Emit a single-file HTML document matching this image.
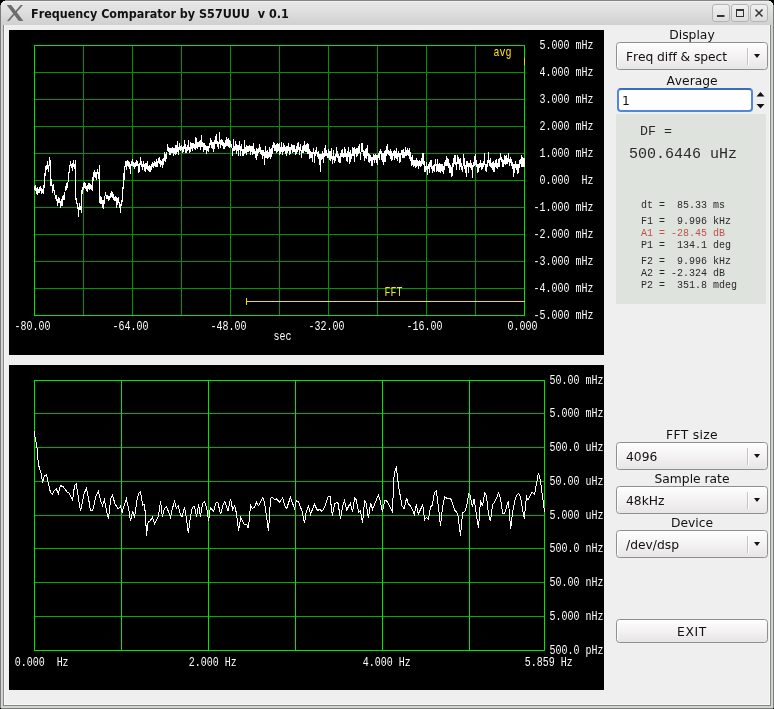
<!DOCTYPE html>
<html><head><meta charset="utf-8"><title>Frequency Comparator by S57UUU v 0.1</title>
<style>
html,body{margin:0;padding:0;}
body{width:774px;height:709px;overflow:hidden;background:#000;position:relative;font-family:"DejaVu Sans","Liberation Sans",sans-serif;}
#win{position:absolute;left:0;top:0;width:774px;height:709px;background:#efefef;overflow:hidden;}
.k{position:absolute;background:#000;height:1px;}
#titlebar{position:absolute;left:0;top:0;width:774px;height:25px;background:linear-gradient(#858585 0,#858585 1px,#f1f1f1 1px,#f1f1f1 2px,#e7e7e7 2px,#e0e0e0 11px,#d5d5d5 20px,#d0d0d0 25px);}
.wb{position:absolute;top:4px;width:17.5px;height:17.5px;box-sizing:border-box;border:1px solid #b4b4b4;border-radius:3px;background:linear-gradient(#f0f0f0,#dcdcdc);}
.eo{position:absolute;background:#7a7d7a;}
.em{position:absolute;background:#d3d3d3;}
.ei{position:absolute;background:#858785;}
.eh{position:absolute;background:#f8f8f8;}
.plot{position:absolute;left:9px;width:595px;height:325px;background:#000;}
svg text{font:10px "Liberation Mono","DejaVu Sans Mono",monospace;fill:#fff;white-space:pre;}
.combo{position:absolute;left:616px;width:152px;height:28px;box-sizing:border-box;border:1px solid #8e908e;border-radius:3.5px;background:linear-gradient(#fefefe,#f4f2f2 50%,#e7e5e5);box-shadow:inset 1px 1px 0 #fff;}
.combo i{position:absolute;left:130px;top:5px;width:1px;height:17px;background:#c4c4c4;border-right:1px solid #fff;}
.combo b{position:absolute;left:136.5px;top:11px;width:0;height:0;border-left:3.5px solid transparent;border-right:3.5px solid transparent;border-top:4px solid #111;}
#spin{position:absolute;left:617px;top:88px;width:136px;height:24px;box-sizing:border-box;border:2px solid #5288db;border-top-color:#3a6cbd;border-radius:4px;background:#fff;}
#panel{position:absolute;left:616px;top:114px;width:150px;height:190px;background:#dfe3dd;}
#exit{position:absolute;left:616px;top:619px;width:152px;height:24px;box-sizing:border-box;border:1px solid #8e908e;border-radius:3.5px;background:linear-gradient(#fefefe,#f4f2f2 50%,#e6e4e4);box-shadow:inset 1px 1px 0 #fff;}
#txt{position:absolute;left:0;top:0;width:774px;height:709px;will-change:transform;}
#txt div{position:absolute;white-space:pre;color:#111;font-kerning:none;}
#title{left:31px;top:6px;font:bold 12px "DejaVu Sans","Liberation Sans",sans-serif;line-height:16px;transform:scaleX(0.933);transform-origin:0 0;}
#txt .lbl{left:616px;width:152px;text-align:center;font-size:12.3px;line-height:18px;}
#txt .ct{left:626px;font-size:12.3px;line-height:26px;}
#txt .m{font-family:"Liberation Mono",monospace;color:#2a2a2a;font-size:10px;left:641px;}
</style></head><body>
<div id="win">
<div id="titlebar"></div>
<svg style="position:absolute;left:7px;top:5px" width="17" height="16" viewBox="0 0 17 16"><path d="M0.3,0.3 L4,0.3 L15.8,15.7 L12,15.7 Z" fill="#6c6c6c" stroke="#555" stroke-width="0.6"/><path d="M13.6,0 L16,0 L2.2,16 L0,16 Z" fill="#6e6e6e"/></svg>
<div class="wb" style="left:712px"><svg width="15" height="15"><rect x="4" y="10" width="7.5" height="2" fill="#333"/></svg></div>
<div class="wb" style="left:731px"><svg width="15" height="15"><rect x="4.5" y="4.5" width="7" height="7" fill="none" stroke="#333" stroke-width="1"/><rect x="4" y="4" width="8" height="2" fill="#333"/></svg></div>
<div class="wb" style="left:750px"><svg width="15" height="15"><path d="M4.5,4.5 L11.5,11.5 M11.5,4.5 L4.5,11.5" stroke="#333" stroke-width="1.5" fill="none"/></svg></div>

<div class="plot" style="top:30px"></div>
<div class="plot" style="top:365px"></div>
<svg style="position:absolute;left:0;top:0;will-change:transform" width="774" height="709" viewBox="0 0 774 709">
<g shape-rendering="crispEdges">
<rect x="83" y="45" width="1" height="271" fill="#009400"/><rect x="132" y="45" width="1" height="271" fill="#009400"/><rect x="181" y="45" width="1" height="271" fill="#009400"/><rect x="230" y="45" width="1" height="271" fill="#009400"/><rect x="279" y="45" width="1" height="271" fill="#009400"/><rect x="328" y="45" width="1" height="271" fill="#009400"/><rect x="377" y="45" width="1" height="271" fill="#009400"/><rect x="426" y="45" width="1" height="271" fill="#009400"/><rect x="475" y="45" width="1" height="271" fill="#009400"/><rect x="34" y="72" width="491" height="1" fill="#009400"/><rect x="34" y="99" width="491" height="1" fill="#009400"/><rect x="34" y="126" width="491" height="1" fill="#009400"/><rect x="34" y="153" width="491" height="1" fill="#009400"/><rect x="34" y="180" width="491" height="1" fill="#009400"/><rect x="34" y="207" width="491" height="1" fill="#009400"/><rect x="34" y="234" width="491" height="1" fill="#009400"/><rect x="34" y="261" width="491" height="1" fill="#009400"/><rect x="34" y="288" width="491" height="1" fill="#009400"/><rect x="34.5" y="45.5" width="490" height="270" fill="none" stroke="#00e600" stroke-width="1"/>
<rect x="34" y="413" width="511" height="1" fill="#00b000"/><rect x="34" y="447" width="511" height="1" fill="#00b000"/><rect x="34" y="481" width="511" height="1" fill="#00b000"/><rect x="34" y="515" width="511" height="1" fill="#00b000"/><rect x="34" y="548" width="511" height="1" fill="#00b000"/><rect x="34" y="582" width="511" height="1" fill="#00b000"/><rect x="34" y="616" width="511" height="1" fill="#00b000"/><rect x="121" y="380" width="1" height="271" fill="#00e600"/><rect x="208" y="380" width="1" height="271" fill="#00e600"/><rect x="295" y="380" width="1" height="271" fill="#00e600"/><rect x="382" y="380" width="1" height="271" fill="#00e600"/><rect x="469" y="380" width="1" height="271" fill="#00e600"/><rect x="34.5" y="380.5" width="510" height="270" fill="none" stroke="#00e600" stroke-width="1"/>
<path d="M34.5,186v4M35.5,185v6M36.5,188v6M37.5,187v8M38.5,189v4M39.5,187v6M40.5,186v5M41.5,188v6M42.5,189v4M43.5,185v9M44.5,173v15M45.5,166v10M46.5,165v5M47.5,161v8M48.5,165v7M49.5,157v9M50.5,160v26M51.5,179v7M52.5,185v8M53.5,184v7M54.5,190v5M55.5,195v4M56.5,195v6M57.5,199v7M58.5,197v6M59.5,198v5M60.5,201v7M61.5,199v7M62.5,196v10M63.5,195v5M64.5,192v8M65.5,186v5M66.5,183v7M67.5,182v6M68.5,172v10M69.5,165v8M70.5,161v5M71.5,164v4M72.5,163v8M73.5,160v7M74.5,164v5M75.5,160v40M76.5,198v6M77.5,203v6M78.5,207v10M79.5,203v7M80.5,206v4M81.5,190v23M82.5,187v7M83.5,183v7M84.5,182v6M85.5,183v6M86.5,186v5M87.5,185v7M88.5,183v6M89.5,183v7M90.5,184v5M91.5,185v5M92.5,177v14M93.5,172v9M94.5,170v7M95.5,172v6M96.5,172v8M97.5,169v5M98.5,172v7M99.5,165v38M100.5,196v8M101.5,197v7M102.5,200v8M103.5,200v9M104.5,196v8M105.5,192v4M106.5,195v4M107.5,195v4M108.5,196v5M109.5,196v4M110.5,193v5M111.5,191v6M112.5,192v6M113.5,194v6M114.5,197v4M115.5,196v5M116.5,197v11M117.5,198v7M118.5,197v6M119.5,202v6M120.5,204v9M121.5,200v6M122.5,187v15M123.5,173v16M124.5,166v14M125.5,161v6M126.5,161v9M127.5,160v6M128.5,161v6M129.5,162v7M130.5,164v10M131.5,161v5M132.5,159v7M133.5,162v5M134.5,163v6M135.5,162v5M136.5,160v6M137.5,161v5M138.5,164v9M139.5,163v9M140.5,157v8M141.5,161v6M142.5,164v6M143.5,161v6M144.5,164v7M145.5,163v9M146.5,163v6M147.5,161v9M148.5,166v5M149.5,165v7M150.5,166v6M151.5,164v6M152.5,162v5M153.5,163v5M154.5,161v5M155.5,162v5M156.5,159v8M157.5,161v6M158.5,158v5M159.5,157v7M160.5,160v7M161.5,161v4M162.5,159v9M163.5,158v7M164.5,152v9M165.5,154v8M166.5,152v7M167.5,144v7M168.5,147v5M169.5,148v7M170.5,148v7M171.5,148v5M172.5,147v6M173.5,148v8M174.5,148v6M175.5,145v10M176.5,145v9M177.5,141v11M178.5,147v8M179.5,143v7M180.5,146v5M181.5,145v5M182.5,147v6M183.5,146v6M184.5,140v9M185.5,144v9M186.5,147v6M187.5,145v6M188.5,140v10M189.5,147v6M190.5,142v10M191.5,143v6M192.5,143v8M193.5,143v5M194.5,144v5M195.5,137v13M196.5,138v10M197.5,142v7M198.5,142v5M199.5,141v6M200.5,140v10M201.5,135v12M202.5,142v5M203.5,143v9M204.5,143v7M205.5,145v5M206.5,146v8M207.5,146v5M208.5,146v6M209.5,143v5M210.5,138v7M211.5,140v8M212.5,142v7M213.5,142v10M214.5,140v9M215.5,136v8M216.5,134v10M217.5,141v6M218.5,142v7M219.5,132v12M220.5,140v8M221.5,139v6M222.5,140v6M223.5,142v7M224.5,143v6M225.5,140v7M226.5,137v9M227.5,139v7M228.5,138v9M229.5,140v8M230.5,141v6M231.5,144v4M232.5,148v8M233.5,139v12M234.5,146v5M235.5,141v9M236.5,144v10M237.5,145v6M238.5,145v11M239.5,141v9M240.5,146v10M241.5,144v7M242.5,149v7M243.5,149v7M244.5,140v14M245.5,147v6M246.5,145v10M247.5,146v6M248.5,146v6M249.5,145v6M250.5,146v9M251.5,146v6M252.5,146v9M253.5,143v11M254.5,149v5M255.5,151v7M256.5,148v12M257.5,149v7M258.5,148v5M259.5,144v8M260.5,147v7M261.5,150v5M262.5,150v9M263.5,150v6M264.5,152v13M265.5,146v12M266.5,151v7M267.5,150v9M268.5,152v6M269.5,147v10M270.5,149v10M271.5,148v9M272.5,145v9M273.5,142v6M274.5,143v8M275.5,145v6M276.5,144v9M277.5,143v9M278.5,144v7M279.5,143v12M280.5,147v7M281.5,142v10M282.5,147v8M283.5,143v9M284.5,145v6M285.5,147v7M286.5,146v10M287.5,146v7M288.5,143v8M289.5,147v8M290.5,147v7M291.5,144v6M292.5,145v8M293.5,145v7M294.5,145v7M295.5,149v6M296.5,146v8M297.5,143v9M298.5,142v8M299.5,147v8M300.5,144v7M301.5,150v8M302.5,146v7M303.5,145v8M304.5,141v10M305.5,145v7M306.5,144v8M307.5,143v11M308.5,144v10M309.5,149v10M310.5,151v7M311.5,152v6M312.5,152v10M313.5,148v6M314.5,152v11M315.5,150v6M316.5,147v7M317.5,152v5M318.5,151v8M319.5,154v11M320.5,154v18M321.5,154v6M322.5,151v8M323.5,153v10M324.5,148v9M325.5,145v11M326.5,150v6M327.5,153v5M328.5,149v9M329.5,151v9M330.5,151v10M331.5,148v11M332.5,156v8M333.5,150v10M334.5,156v7M335.5,154v7M336.5,147v10M337.5,151v7M338.5,154v8M339.5,156v7M340.5,153v10M341.5,150v7M342.5,149v8M343.5,153v5M344.5,147v10M345.5,149v8M346.5,153v8M347.5,151v11M348.5,147v10M349.5,152v12M350.5,150v12M351.5,154v5M352.5,147v9M353.5,148v8M354.5,147v15M355.5,149v5M356.5,148v9M357.5,148v8M358.5,146v8M359.5,144v9M360.5,152v8M361.5,143v9M362.5,143v9M363.5,150v6M364.5,151v10M365.5,149v9M366.5,148v11M367.5,145v11M368.5,153v9M369.5,154v9M370.5,155v6M371.5,157v9M372.5,157v9M373.5,154v6M374.5,155v8M375.5,154v6M376.5,155v8M377.5,155v10M378.5,153v5M379.5,151v9M380.5,149v5M381.5,151v9M382.5,153v9M383.5,153v12M384.5,151v11M385.5,150v12M386.5,146v10M387.5,144v10M388.5,150v5M389.5,151v5M390.5,149v10M391.5,151v10M392.5,153v7M393.5,151v5M394.5,150v10M395.5,151v7M396.5,148v11M397.5,153v8M398.5,151v6M399.5,153v10M400.5,153v9M401.5,150v5M402.5,150v8M403.5,149v9M404.5,152v6M405.5,147v9M406.5,150v6M407.5,148v7M408.5,150v6M409.5,148v11M410.5,152v9M411.5,157v9M412.5,155v10M413.5,160v7M414.5,160v6M415.5,160v8M416.5,158v9M417.5,160v6M418.5,161v8M419.5,160v6M420.5,161v6M421.5,158v8M422.5,153v11M423.5,153v12M424.5,161v11M425.5,166v6M426.5,162v8M427.5,166v9M428.5,164v5M429.5,162v11M430.5,160v7M431.5,160v9M432.5,166v7M433.5,165v6M434.5,164v8M435.5,159v7M436.5,164v8M437.5,159v12M438.5,164v8M439.5,163v9M440.5,164v9M441.5,164v7M442.5,164v8M443.5,166v8M444.5,162v8M445.5,160v6M446.5,156v10M447.5,158v8M448.5,159v9M449.5,163v10M450.5,165v8M451.5,167v10M452.5,163v13M453.5,158v9M454.5,155v9M455.5,155v10M456.5,162v8M457.5,155v9M458.5,157v7M459.5,159v11M460.5,158v9M461.5,163v7M462.5,166v6M463.5,154v12M464.5,158v11M465.5,165v8M466.5,161v16M467.5,161v6M468.5,163v10M469.5,163v4M470.5,160v8M471.5,163v7M472.5,165v13M473.5,162v5M474.5,156v10M475.5,154v11M476.5,160v7M477.5,164v9M478.5,164v8M479.5,163v5M480.5,160v7M481.5,163v7M482.5,163v6M483.5,161v6M484.5,153v12M485.5,164v7M486.5,164v8M487.5,160v7M488.5,152v11M489.5,160v6M490.5,158v9M491.5,163v5M492.5,162v8M493.5,161v11M494.5,163v9M495.5,160v7M496.5,159v9M497.5,163v6M498.5,159v8M499.5,158v9M500.5,153v7M501.5,157v5M502.5,159v8M503.5,160v7M504.5,155v9M505.5,156v9M506.5,155v9M507.5,158v6M508.5,153v9M509.5,159v7M510.5,157v6M511.5,159v7M512.5,162v7M513.5,164v13M514.5,164v9M515.5,161v7M516.5,164v6M517.5,164v10M518.5,164v9M519.5,160v8M520.5,159v5M521.5,155v12M522.5,157v10M523.5,158v9M524.5,158v9" fill="none" stroke="#fff" stroke-width="1"/>
<polyline points="34.0,431.0 37.0,447.5 38.3,464.0 41.0,473.2 42.5,482.4 44.3,476.0 46.5,475.0 48.3,483.3 50.5,492.5 52.4,494.3 54.2,490.6 56.2,488.8 58.4,493.4 60.3,485.7 63.0,486.4 66.7,491.6 69.4,493.4 72.6,500.4 74.6,485.1 76.2,484.2 78.0,495.2 80.5,511.4 84.1,493.4 86.5,488.3 88.3,497.0 90.5,510.8 92.7,510.8 95.7,497.0 98.3,491.2 100.6,500.7 102.5,505.3 104.3,499.8 106.7,511.7 108.5,518.7 110.7,498.9 112.6,495.2 114.8,503.5 118.1,509.0 120.5,506.2 122.1,512.2 126.3,498.8 128.5,508.0 130.6,521.4 132.7,510.8 134.5,517.8 136.6,502.3 138.6,493.1 140.5,491.7 142.6,505.1 144.0,504.4 145.4,512.9 146.5,535.5 148.2,522.0 150.3,520.6 152.4,517.5 154.6,523.5 157.0,519.2 158.4,515.7 160.6,500.9 162.3,516.4 164.4,508.7 166.5,506.5 168.7,512.2 170.5,517.8 172.5,508.0 174.6,501.6 176.4,508.0 178.1,505.8 180.4,515.0 182.1,516.4 184.5,507.2 186.3,517.8 188.4,533.3 190.5,516.4 192.4,507.2 194.5,506.5 196.6,517.1 198.6,503.7 200.4,517.1 202.5,503.7 204.6,501.6 206.7,508.0 208.6,521.4 210.3,507.2 213.5,511.5 215.9,503.0 217.8,502.3 220.6,514.3 223.0,505.1 224.8,501.6 228.1,510.8 230.5,498.8 232.6,509.4 234.7,505.8 236.5,513.6 238.6,531.2 240.7,517.1 244.6,524.9 246.7,524.2 248.4,528.4 250.6,505.1 252.3,508.7 254.4,507.2 256.5,502.3 258.7,505.8 262.9,497.4 264.7,503.7 268.5,531.2 270.6,498.1 272.1,497.4 274.9,499.5 276.3,498.8 279.8,502.3 282.6,497.8 284.8,505.8 286.6,508.7 290.4,497.4 294.6,508.7 296.3,500.9 298.6,501.6 300.0,505.7 302.1,511.4 304.5,523.3 306.3,511.4 308.5,506.4 310.6,514.2 314.4,504.3 317.6,510.6 319.7,509.2 321.9,511.4 324.7,507.1 328.2,496.5 330.0,496.5 332.4,515.6 334.6,503.6 337.8,502.2 340.6,519.1 342.3,507.8 344.4,500.5 346.8,509.9 350.4,502.9 352.5,512.1 354.7,497.7 356.4,500.1 358.5,512.1 360.4,510.6 362.5,523.3 364.6,500.8 366.3,503.6 368.4,518.4 370.5,502.9 372.6,509.2 378.3,495.1 380.4,501.5 382.5,512.1 384.6,500.5 386.3,500.1 392.4,511.4 394.2,472.6 396.4,467.6 398.6,486.5 402.0,505.7 404.1,508.5 406.6,498.0 408.3,504.3 410.5,505.7 414.3,514.2 416.4,504.3 418.2,514.2 422.7,505.0 424.6,519.8 426.4,517.7 428.4,519.1 430.6,506.4 432.3,505.7 434.4,492.3 436.3,490.9 438.7,509.2 440.5,526.2 442.5,507.8 444.7,496.5 446.4,498.0 450.6,498.7 452.5,502.9 454.6,509.9 457.7,513.5 460.5,536.0 462.6,512.8 464.8,511.4 466.6,506.4 468.7,493.7 470.2,495.4 472.3,507.0 474.2,498.6 476.3,514.2 478.5,528.0 480.5,500.0 482.4,506.3 484.6,493.0 486.4,495.7 488.5,514.5 490.5,521.1 492.6,504.2 494.7,502.1 498.6,492.9 500.3,497.8 502.7,513.3 504.6,513.3 508.4,500.6 510.6,528.9 512.7,511.2 514.9,500.6 516.5,495.7 518.7,493.3 520.5,497.1 524.3,519.0 526.4,496.4 528.1,499.9 532.1,491.9 534.6,494.3 536.6,483.0 538.4,472.7 540.5,480.9 542.6,497.1 544.5,511.9" fill="none" stroke="#fff" stroke-width="1"/>
<rect x="246" y="301" width="279" height="1" fill="#f5dc00"/>
<rect x="246" y="298" width="1" height="7" fill="#f5dc00"/>
<rect x="524" y="58" width="1" height="7" fill="#ffd200"/>
</g>
<text xml:space="preserve" transform="translate(539.5,49) scale(1,1.32)">5.000 mHz</text><text xml:space="preserve" transform="translate(539.5,76) scale(1,1.32)">4.000 mHz</text><text xml:space="preserve" transform="translate(539.5,103) scale(1,1.32)">3.000 mHz</text><text xml:space="preserve" transform="translate(539.5,130) scale(1,1.32)">2.000 mHz</text><text xml:space="preserve" transform="translate(539.5,157) scale(1,1.32)">1.000 mHz</text><text xml:space="preserve" transform="translate(539.5,184) scale(1,1.32)">0.000  Hz</text><text xml:space="preserve" transform="translate(533.5,211) scale(1,1.32)">-1.000 mHz</text><text xml:space="preserve" transform="translate(533.5,238) scale(1,1.32)">-2.000 mHz</text><text xml:space="preserve" transform="translate(533.5,265) scale(1,1.32)">-3.000 mHz</text><text xml:space="preserve" transform="translate(533.5,292) scale(1,1.32)">-4.000 mHz</text><text xml:space="preserve" transform="translate(533.5,319) scale(1,1.32)">-5.000 mHz</text><text xml:space="preserve" transform="translate(14.5,330) scale(1,1.32)">-80.00</text><text xml:space="preserve" transform="translate(112.5,330) scale(1,1.32)">-64.00</text><text xml:space="preserve" transform="translate(210.5,330) scale(1,1.32)">-48.00</text><text xml:space="preserve" transform="translate(308.5,330) scale(1,1.32)">-32.00</text><text xml:space="preserve" transform="translate(406.5,330) scale(1,1.32)">-16.00</text><text xml:space="preserve" transform="translate(507.5,330) scale(1,1.32)">0.000</text><text xml:space="preserve" transform="translate(273.5,340) scale(1,1.32)">sec</text>
<text xml:space="preserve" transform="translate(549.5,384) scale(1,1.32)">50.00 mHz</text><text xml:space="preserve" transform="translate(549.5,417) scale(1,1.32)">5.000 mHz</text><text xml:space="preserve" transform="translate(549.5,451) scale(1,1.32)">500.0 uHz</text><text xml:space="preserve" transform="translate(549.5,485) scale(1,1.32)">50.00 uHz</text><text xml:space="preserve" transform="translate(549.5,519) scale(1,1.32)">5.000 uHz</text><text xml:space="preserve" transform="translate(549.5,552) scale(1,1.32)">500.0 nHz</text><text xml:space="preserve" transform="translate(549.5,586) scale(1,1.32)">50.00 nHz</text><text xml:space="preserve" transform="translate(549.5,620) scale(1,1.32)">5.000 nHz</text><text xml:space="preserve" transform="translate(549.5,654) scale(1,1.32)">500.0 pHz</text><text xml:space="preserve" transform="translate(14.7,666) scale(1,1.32)">0.000  Hz</text><text xml:space="preserve" transform="translate(188.7,666) scale(1,1.32)">2.000 Hz</text><text xml:space="preserve" transform="translate(362.7,666) scale(1,1.32)">4.000 Hz</text><text xml:space="preserve" transform="translate(524.7,666) scale(1,1.32)">5.859 Hz</text>
<text xml:space="preserve" transform="translate(384.5,296) scale(1,1.32)" style="fill:#ffe600">FFT</text>
<text xml:space="preserve" transform="translate(493.5,56) scale(1,1.32)" style="fill:#ffe600">avg</text>
</svg>

<div class="combo" style="top:42px"><i></i><b></b></div>
<div id="spin"></div>
<svg style="position:absolute;left:755px;top:90px" width="12" height="22"><path d="M1.5,6.5 L5.5,2 L9.5,6.5 Z M1.5,14 L5.5,18.5 L9.5,14 Z" fill="#111"/></svg>
<div id="panel"></div>
<div class="combo" style="top:442px"><i></i><b></b></div>
<div class="combo" style="top:486px"><i></i><b></b></div>
<div class="combo" style="top:530px"><i></i><b></b></div>
<div id="exit"></div>

<div id="txt">
<div id="title">Frequency Comparator by S57UUU  v 0.1</div>
<div class="lbl" style="top:26px">Display</div>
<div class="ct" style="top:43.5px;letter-spacing:-0.06px">Freq diff &amp; spect</div>
<div class="lbl" style="top:72px">Average</div>
<div class="ct" style="left:622px;top:87.5px">1</div>
<div class="m" style="left:640px;top:124px;font-size:13.3px">DF =</div>
<div class="m" style="left:629px;top:145.5px;font-size:15px">500.6446 uHz</div>
<div class="m" style="top:199.5px">dt =  85.33 ms</div>
<div class="m" style="top:215.5px">F1 =  9.996 kHz</div>
<div class="m" style="top:228px;color:#c0504d">A1 = -28.45 dB</div>
<div class="m" style="top:240px">P1 =  134.1 deg</div>
<div class="m" style="top:256px">F2 =  9.996 kHz</div>
<div class="m" style="top:268px">A2 = -2.324 dB</div>
<div class="m" style="top:280px">P2 =  351.8 mdeg</div>
<div class="lbl" style="top:426px;letter-spacing:0.3px">FFT size</div>
<div class="ct" style="top:443.5px">4096</div>
<div class="lbl" style="top:470px">Sample rate</div>
<div class="ct" style="top:487.5px">48kHz</div>
<div class="lbl" style="top:514px">Device</div>
<div class="ct" style="top:531.5px">/dev/dsp</div>
<div class="lbl" style="top:623px;letter-spacing:0.7px">EXIT</div>
</div>

<div class="eo" style="left:0;top:0;width:1px;height:709px"></div>
<div class="em" style="left:1px;top:25px;width:2px;height:684px"></div>
<div class="ei" style="left:3px;top:25px;width:1px;height:681px"></div>
<div class="eh" style="left:4px;top:25px;width:1px;height:680px"></div>
<div class="eo" style="left:773px;top:0;width:1px;height:709px"></div>
<div class="em" style="left:771px;top:25px;width:2px;height:684px"></div>
<div class="ei" style="left:770px;top:25px;width:1px;height:681px"></div>
<div class="eh" style="left:769px;top:25px;width:1px;height:680px"></div>
<div class="eh" style="left:4px;top:704px;width:766px;height:1px"></div>
<div class="ei" style="left:3px;top:705px;width:768px;height:1px"></div>
<div class="em" style="left:1px;top:706px;width:772px;height:2px"></div>
<div class="eo" style="left:0;top:708px;width:774px;height:1px"></div>
<div class="k" style="left:0;top:0px;width:5px"></div><div class="k" style="right:0;top:0px;width:5px"></div><div class="k" style="left:0;top:1px;width:3px"></div><div class="k" style="right:0;top:1px;width:3px"></div><div class="k" style="left:0;top:2px;width:2px"></div><div class="k" style="right:0;top:2px;width:2px"></div><div class="k" style="left:0;top:3px;width:1px"></div><div class="k" style="right:0;top:3px;width:1px"></div><div class="k" style="left:0;top:4px;width:1px"></div><div class="k" style="right:0;top:4px;width:1px"></div><div class="k" style="left:0;top:708px;width:1px"></div><div class="k" style="right:0;top:708px;width:1px"></div>
</div>
</body></html>
